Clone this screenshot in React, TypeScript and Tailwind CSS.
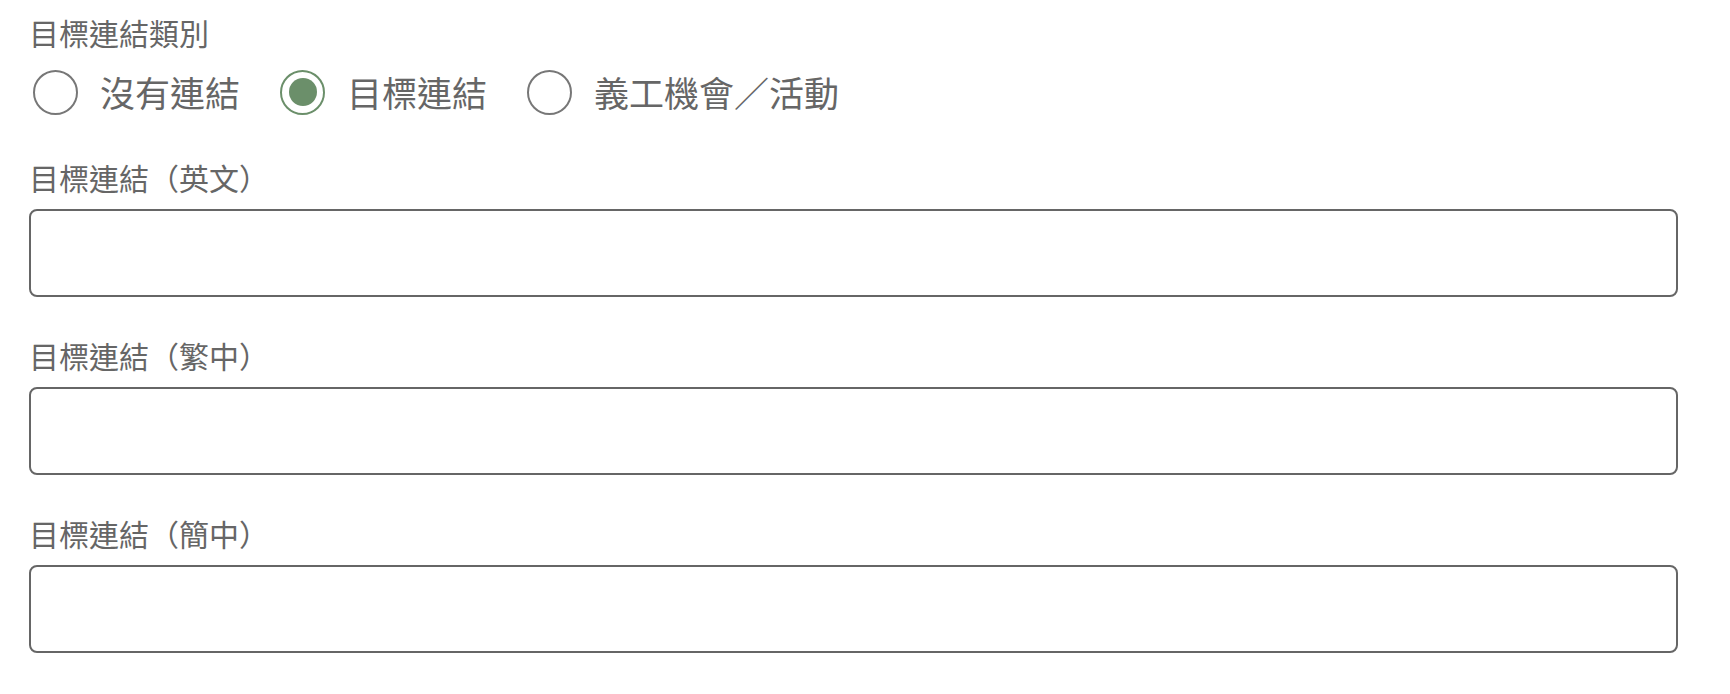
import { useState } from "react";

const options = ["沒有連結", "目標連結", "義工機會／活動"];
const fields = ["目標連結（英文）", "目標連結（繁中）", "目標連結（簡中）"];

export default function App() {
	const [linkType, setLinkType] = useState(1);

	return (
		<div
			className="min-h-screen bg-white pl-[29px] pt-[10px] text-[#666]"
			style={{ fontFamily: '"Noto Sans CJK TC", "Noto Sans", sans-serif' }}
		>
			<div className="w-[1649px]">
				<div className="text-[30px] leading-[45px]">目標連結類別</div>

				{/* Radio group */}
				<div className="mt-[12px] flex h-[50px] items-center gap-[36px]">
					{options.map((opt, i) => (
						<label
							key={opt}
							className="flex cursor-pointer items-center"
							onClick={() => setLinkType(i)}
						>
							<span
								className={
									linkType === i
										? "ml-[4px] flex h-[45px] w-[45px] items-center justify-center rounded-full border-2 border-[#6b8f6a]"
										: "ml-[4px] flex h-[45px] w-[45px] items-center justify-center rounded-full border-2 border-[#777]"
								}
							>
								{linkType === i && (
									<span className="h-[28px] w-[28px] rounded-full bg-[#6b8f6a]" />
								)}
							</span>
							<span className="ml-[22px] text-[35px] leading-[50px]">{opt}</span>
						</label>
					))}
				</div>

				{/* Link fields */}
				<div className="mt-[38px] flex flex-col gap-[36px]">
					{fields.map((f) => (
						<div key={f}>
							<div className="text-[30px] leading-[45px]">{f}</div>
							<input
								type="text"
								className="mt-[9px] h-[88px] w-full rounded-[8px] border-2 border-[#666] px-4 text-[30px] outline-none"
							/>
						</div>
					))}
				</div>
			</div>
		</div>
	);
}
